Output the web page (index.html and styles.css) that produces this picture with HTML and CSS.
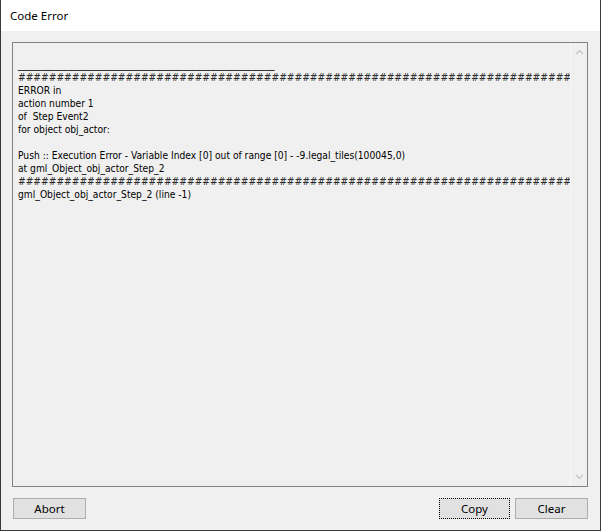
FILE: index.html
```html
<!DOCTYPE html>
<html lang="en">
<head>
  <meta charset="UTF-8">
  <title>Code Error</title>
  <link rel="stylesheet" href="styles.css">
</head>
<body>
<main class="dialog">
  <header class="titleBar">Code Error</header>
  <section class="dialogBody">
    <div class="logBox">
      <pre class="logText">
________________________________________________________
<span class="hashLine">############################################################################################</span>
ERROR in
action number 1
of  Step Event2
for object obj_actor:

Push :: Execution Error - Variable Index [0] out of range [0] - -9.legal_tiles(100045,0)
at gml_Object_obj_actor_Step_2
<span class="hashLine">############################################################################################</span>
gml_Object_obj_actor_Step_2 (line -1)</pre>
      <div class="scrollBar">
        <svg class="arrow" width="9" height="6" viewBox="0 0 9 6"><path d="M1 5 L4.5 1.5 L8 5" fill="none" stroke="#c2c2c2" stroke-width="1.2"/></svg>
        <svg class="arrow" width="9" height="6" viewBox="0 0 9 6"><path d="M1 1 L4.5 4.5 L8 1" fill="none" stroke="#c2c2c2" stroke-width="1.2"/></svg>
      </div>
    </div>
    <div class="buttonRow">
      <button class="btn">Abort</button>
      <div class="buttonGroup">
        <button class="btn btnFocus">Copy</button>
        <button class="btn">Clear</button>
      </div>
    </div>
  </section>
</main>
</body>
</html>
```

FILE: styles.css
```css
:root {
  --frameColor: #3a3a3a;
  --faceColor: #f0f0f0;
  --buttonColor: #e1e1e1;
  --buttonBorder: #adadad;
  --boxBorder: #828282;
}
body {
  margin: 0;
  background: var(--faceColor);
}
.dialog {
  width: 601px;
  height: 531px;
  box-sizing: border-box;
  display: flex;
  flex-direction: column;
  border: 1px solid var(--frameColor);
  border-top: none;
  background: var(--faceColor);
}
.titleBar {
  height: 31px;
  flex: none;
  box-sizing: border-box;
  padding: 0 0 1px 9px;
  display: flex;
  align-items: center;
  background: #fff;
  font-family: "Noto Sans", "Open Sans", sans-serif;
  font-size: 11.5px;
  color: #000;
}
.dialogBody {
  flex: 1;
  display: flex;
  flex-direction: column;
  padding: 11px 12px 11px 11px;
  gap: 11px;
}
.logBox {
  flex: 1;
  display: flex;
  border: 1px solid var(--boxBorder);
  background: var(--faceColor);
  overflow: hidden;
  min-height: 0;
}
.logText {
  flex: 1;
  margin: 0;
  padding: 15px 0 0 5px;
  overflow: hidden;
  font-family: "DejaVu Sans Condensed", "DejaVu Sans", sans-serif;
  font-stretch: condensed;
  font-size: 10.2px;
  line-height: 13px;
  color: #000;
  white-space: pre;
}
.hashLine {
  color: #2a2a2a;
}
.scrollBar {
  width: 16px;
  flex: none;
  display: flex;
  flex-direction: column;
  justify-content: space-between;
  align-items: center;
  padding: 6px 0 6px;
  border-left: 1px solid #f7f7f7;
  background: var(--faceColor);
}
.arrow {
  display: block;
}
.buttonRow {
  display: flex;
  justify-content: space-between;
  align-items: center;
  flex: none;
}
.buttonGroup {
  display: flex;
  gap: 4px;
}
.btn {
  width: 73px;
  height: 21px;
  padding: 0;
  margin: 0 0 0 1px;
  border: 1px solid var(--buttonBorder);
  background: var(--buttonColor);
  font-family: "Noto Sans", "Open Sans", sans-serif;
  font-size: 11.5px;
  color: #000;
}
.btnFocus {
  width: 71px;
  border: 1px dotted #000;
}
```
